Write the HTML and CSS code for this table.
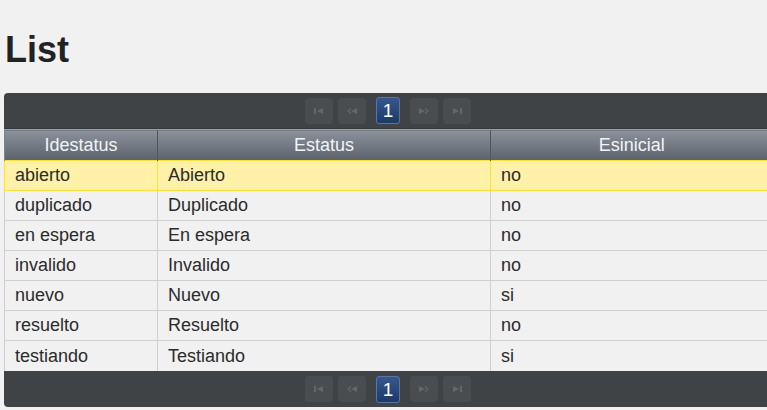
FILE: index.html
```html
<!DOCTYPE html>
<html>
<head>
<meta charset="utf-8">
<title>List</title>
<link rel="stylesheet" href="styles.css">
</head>
<body>
<h1 class="title">List</h1>
<div class="grid">
  <div class="pager pager-top">
    <div class="pbtns">
      <span class="pbtn"><svg width="10" height="6" viewBox="0 0 10 6"><rect x="0" y="0" width="2" height="6" fill="#63666a"/><polygon points="3,3 9,0 9,6" fill="#63666a"/></svg></span>
      <span class="pbtn"><svg width="10" height="6" viewBox="0 0 10 6"><polyline points="4,0.5 1,3 4,5.5" fill="none" stroke="#63666a" stroke-width="1.3"/><polygon points="4,3 10,0 10,6" fill="#63666a"/></svg></span>
      <span class="pnum">1</span>
      <span class="pbtn"><svg width="10" height="6" viewBox="0 0 10 6"><polygon points="0,0 6,3 0,6" fill="#63666a"/><polyline points="6,0.5 9,3 6,5.5" fill="none" stroke="#63666a" stroke-width="1.3"/></svg></span>
      <span class="pbtn"><svg width="10" height="6" viewBox="0 0 10 6"><polygon points="1,0 7,3 1,6" fill="#63666a"/><rect x="8" y="0" width="2" height="6" fill="#63666a"/></svg></span>
    </div>
  </div>
  <table class="tbl">
    <colgroup><col class="c1"><col class="c2"><col class="c3"></colgroup>
    <thead>
      <tr><th>Idestatus</th><th>Estatus</th><th>Esinicial</th></tr>
    </thead>
    <tbody>
      <tr class="hl"><td>abierto</td><td>Abierto</td><td>no</td></tr>
      <tr><td>duplicado</td><td>Duplicado</td><td>no</td></tr>
      <tr><td>en espera</td><td>En espera</td><td>no</td></tr>
      <tr><td>invalido</td><td>Invalido</td><td>no</td></tr>
      <tr><td>nuevo</td><td>Nuevo</td><td>si</td></tr>
      <tr><td>resuelto</td><td>Resuelto</td><td>no</td></tr>
      <tr><td>testiando</td><td>Testiando</td><td>si</td></tr>
    </tbody>
  </table>
  <div class="pager pager-bottom">
    <div class="pbtns">
      <span class="pbtn"><svg width="10" height="6" viewBox="0 0 10 6"><rect x="0" y="0" width="2" height="6" fill="#63666a"/><polygon points="3,3 9,0 9,6" fill="#63666a"/></svg></span>
      <span class="pbtn"><svg width="10" height="6" viewBox="0 0 10 6"><polyline points="4,0.5 1,3 4,5.5" fill="none" stroke="#63666a" stroke-width="1.3"/><polygon points="4,3 10,0 10,6" fill="#63666a"/></svg></span>
      <span class="pnum">1</span>
      <span class="pbtn"><svg width="10" height="6" viewBox="0 0 10 6"><polygon points="0,0 6,3 0,6" fill="#63666a"/><polyline points="6,0.5 9,3 6,5.5" fill="none" stroke="#63666a" stroke-width="1.3"/></svg></span>
      <span class="pbtn"><svg width="10" height="6" viewBox="0 0 10 6"><polygon points="1,0 7,3 1,6" fill="#63666a"/><rect x="8" y="0" width="2" height="6" fill="#63666a"/></svg></span>
    </div>
  </div>
</div>
</body>
</html>
```
FILE: styles.css
```css
html, body {
  margin: 0;
  padding: 0;
  background: #f1f1f1;
  font-family: "Liberation Sans", Arial, sans-serif;
  color: #2b2b2b;
  overflow: hidden;
}
body {
  padding: 0 0 0 4px;
  width: 768px;
}
.title {
  font-size: 36px;
  line-height: 40px;
  font-weight: bold;
  margin: 30px 0 23px 1px;
  color: #222;
}
.grid {
  width: 768px;
}
.pager {
  background: #404346;
  height: 36px;
  display: flex;
  align-items: center;
  justify-content: center;
}
.pager-top {
  border-radius: 4px 4px 0 0;
  border-bottom: 1px solid #35383b;
  height: 35px;
}
.pager-bottom {
  border-radius: 0 0 4px 4px;
}
.pbtns {
  display: flex;
  align-items: center;
  gap: 5px;
}
.pbtn {
  width: 28px;
  height: 26px;
  border-radius: 4px;
  background: #4a4d50;
  display: flex;
  align-items: center;
  justify-content: center;
}
.pnum {
  width: 22px;
  height: 25px;
  margin: 0 5px;
  border-radius: 3px;
  border: 1px solid #5576a6;
  background: linear-gradient(#37578c, #1d3966);
  color: #fff;
  font-size: 19px;
  line-height: 25px;
  text-align: center;
}
.tbl {
  width: 768px;
  border-collapse: collapse;
  table-layout: fixed;
  font-size: 18px;
}
.c1 { width: 153px; }
.c2 { width: 333px; }
.c3 { width: 282px; }
.tbl th {
  height: 30px;
  padding: 0;
  font-weight: normal;
  color: #f2f4f8;
  background: linear-gradient(#8c929c, #5c626b);
  border-left: 1px solid #4f555d;
  border-top: 1px solid #9aa0a8;
  text-align: center;
  line-height: 29px;
}
.tbl th:first-child { border-left: 1px solid #7d838c; }
.tbl td {
  height: 29px;
  padding: 0 0 0 10px;
  line-height: 29px;
  border-bottom: 1px solid #d0d0d0;
  border-left: 1px solid #cfcfcf;
  background: #f1f1f1;
  color: #2b2b2b;
  white-space: nowrap;
}
.tbl tr:last-child td { border-bottom: none; height: 30px; }
.tbl tr.hl td {
  background: #fff1a8;
  border-top: 1px solid #ffdf3a;
  border-bottom: 1px solid #ffdf3a;
  border-left: 1px solid #ffdf3a;
  height: 28px;
}
```
